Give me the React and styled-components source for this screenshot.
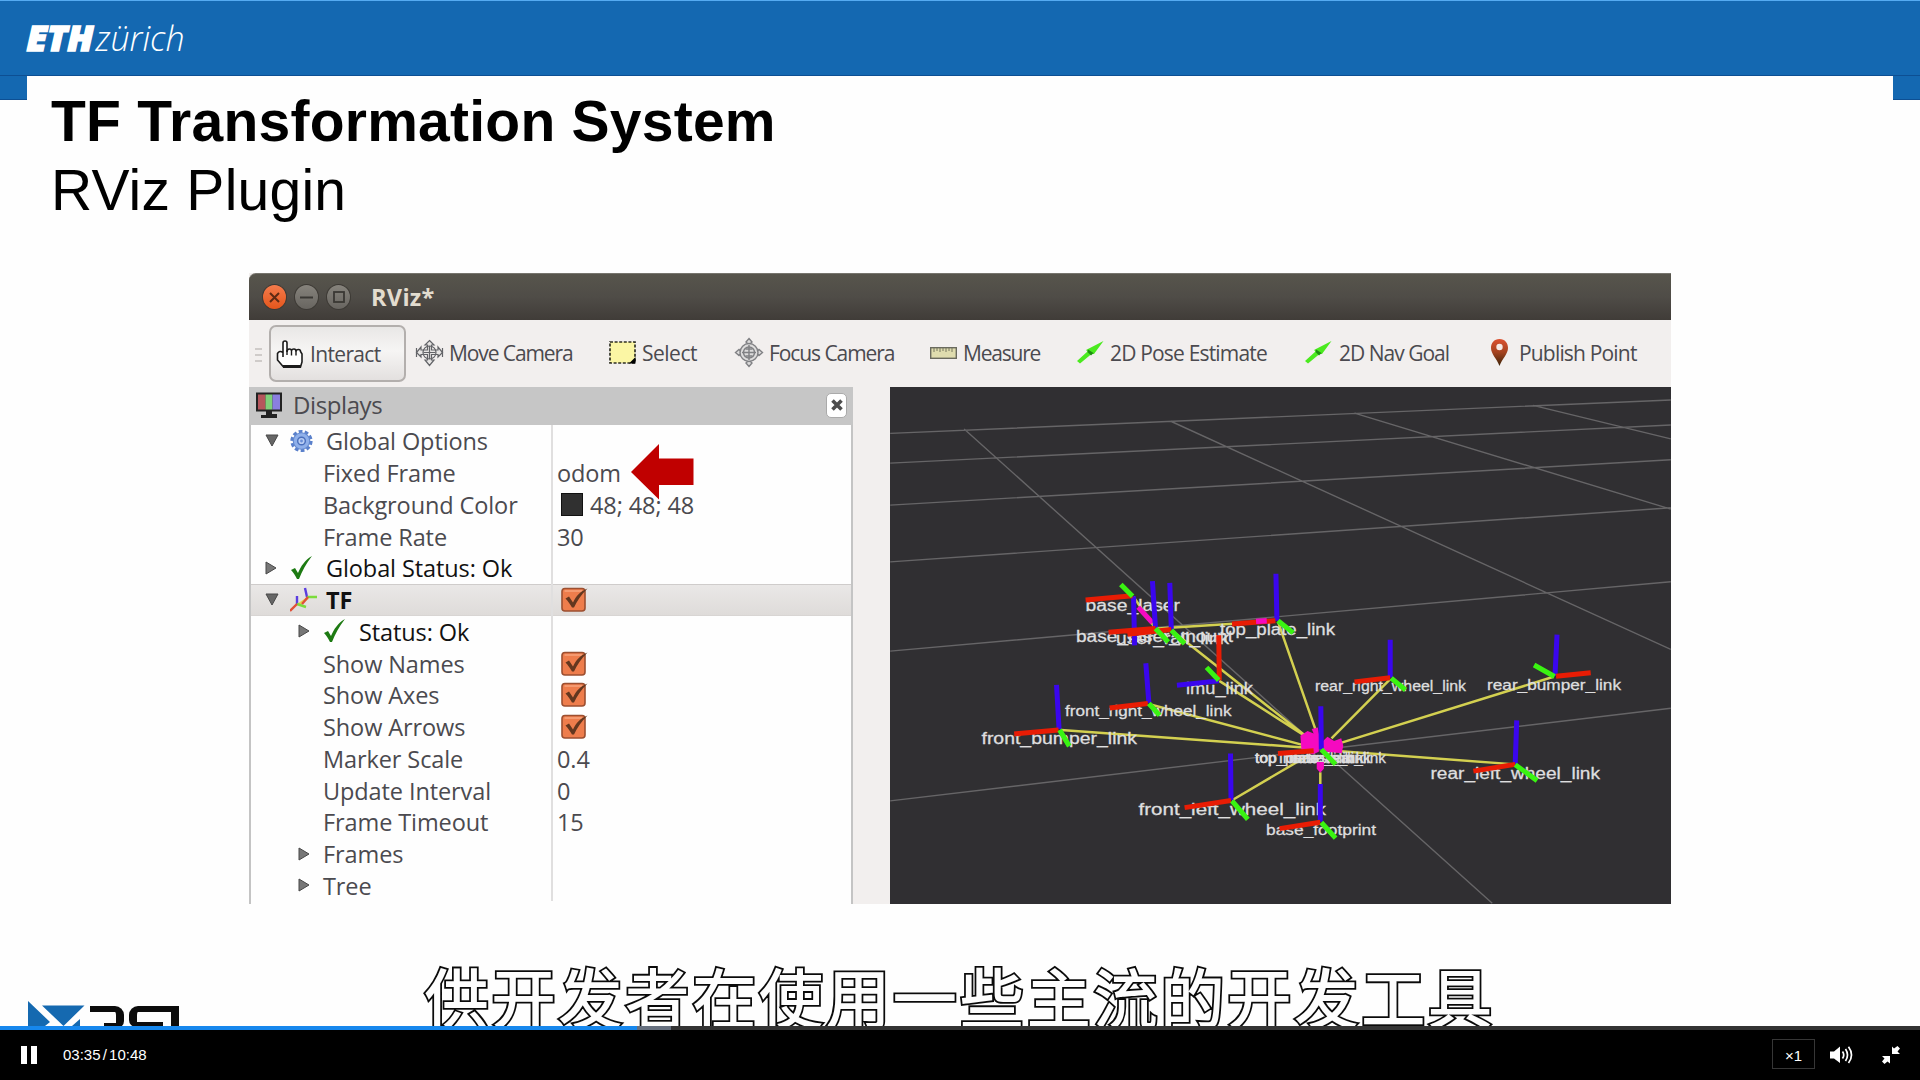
import React from "react";
import styled, { createGlobalStyle } from "styled-components";

const Global = createGlobalStyle`
  * { box-sizing: border-box; }
  html, body { margin: 0; padding: 0; background: #000; overflow: hidden; }
`;

const ui = `"Open Sans", "Noto Sans", sans-serif`;
const arial = `"Liberation Sans", Arial, sans-serif`;

const Player = styled.div`
  width: 1920px;
  height: 1080px;
  display: flex;
  flex-direction: column;
  background: #000;
  overflow: hidden;
`;
const Slide = styled.main`
  position: relative;
  height: 1026px;
  display: flex;
  flex-direction: column;
  background: #fefefe;
  overflow: hidden;
`;
const Banner = styled.header`
  flex: none;
  height: 76px;
  padding: 12px 0 0 24px;
  background: #1468b1;
  border-top: 1px solid #55abf2;
  border-bottom: 1px solid #0d4f93;
  svg { display: block; }
`;
const Heading = styled.div`
  flex: none;
  display: flex;
  height: 197px;
`;
const Notch = styled.div`
  width: ${(p) => p.$w}px;
  height: 24px;
  background: #1468b1;
  border-bottom: 1px solid #0d4f93;
`;
const Titles = styled.div`
  flex: 1;
  padding: 10px 0 0 24px;
  font-family: ${arial};
  color: #000;
`;
const Title = styled.h1`
  margin: 0;
  font-size: 57px;
  line-height: 70px;
  font-weight: 700;
  letter-spacing: 0.24px;
`;
const Subtitle = styled.h2`
  margin: 0;
  font-size: 57px;
  line-height: 69px;
  font-weight: 400;
  letter-spacing: 0.25px;
`;

const Window = styled.section`
  flex: none;
  width: 1422px;
  height: 631px;
  margin-left: 249px;
  display: flex;
  flex-direction: column;
  background: #f2efee;
  font-family: ${ui};
  color: #4b4a4f;
  overflow: hidden;
`;
const TitleBar = styled.div`
  flex: none;
  height: 47px;
  padding-left: 13px;
  display: flex;
  align-items: center;
  gap: 7px;
  background: linear-gradient(#57554c, #4f4c47 50%, #403c38);
  border-top: 1px solid #77756e;
  border-radius: 7px 0 0 0;
`;
const WinButton = styled.span`
  width: 25px;
  height: 26px;
  border-radius: 50%;
  display: grid;
  place-items: center;
  background: ${(p) => (p.$close ? "linear-gradient(#f47b4c, #e4561c)" : "linear-gradient(#86837c, #686560)")};
  border: 1px solid #3d3a35;
`;
const WinTitle = styled.span`
  margin-left: 13px;
  font-size: 23.5px;
  line-height: 30px;
  font-weight: 700;
  color: #e2dccf;
  letter-spacing: 0.3px;
`;
const Toolbar = styled.div`
  flex: none;
  height: 67px;
  display: flex;
  padding-left: 6px;
`;
const Grip = styled.div`
  width: 7px;
  height: 16px;
  margin-top: 28px;
  background: repeating-linear-gradient(#cfcbc9 0 2px, transparent 2px 6px);
`;
const Tool = styled.div`
  flex: none;
  display: flex;
  align-items: center;
  width: ${(p) => p.$w}px;
  height: 57px;
  margin: ${(p) => (p.$active ? "5px 0 0 7px" : "4px 0 0 0")};
  padding-left: ${(p) => p.$pad}px;
  ${(p) =>
    p.$active &&
    `border: 2px solid #b3afad; border-radius: 7px; background: linear-gradient(#e9e7e6, #f6f5f4 45%, #e3e0df);`}
`;
const ToolIcon = styled.span`
  flex: none;
  width: ${(p) => p.$w}px;
  display: flex;
  svg { display: block; overflow: visible; }
`;
const ToolText = styled.span`
  white-space: nowrap;
  font-size: 21px;
  line-height: 30px;
  font-weight: 500;
  letter-spacing: ${(p) => p.$ls}px;
`;
const Body = styled.div`
  flex: 1;
  display: flex;
  gap: 37px;
`;
const Panel = styled.div`
  width: 604px;
  display: flex;
  flex-direction: column;
`;
const PanelHead = styled.div`
  flex: none;
  height: 38px;
  display: flex;
  align-items: center;
  padding: 0 6px 2px 6px;
  background: #c6c6c6;
`;
const PanelName = styled.span`
  flex: 1;
  padding-left: 10px;
  font-size: 24px;
  line-height: 34px;
  font-weight: 500;
  letter-spacing: -0.4px;
`;
const CloseBox = styled.span`
  width: 21px;
  height: 25px;
  border-radius: 5px;
  background: #fff;
  border: 1px solid #aaa;
  display: grid;
  place-items: center;
`;
const Tree = styled.div`
  flex: 1;
  background: #fefefe;
  border: solid #c4c4c4;
  border-width: 0 2px;
  overflow: hidden;
  display: flex;
  flex-direction: column;
`;
const Row = styled.div`
  flex: none;
  display: flex;
  height: 31.75px;
  color: ${(p) => (p.$dark ? "#111" : "#4b4a4f")};
  background: ${(p) => (p.$sel ? "linear-gradient(#eae8e7, #dedbd9)" : "none")};
  box-shadow: ${(p) => (p.$sel ? "inset 0 1px #cfcccb, inset 0 -1px #d8d5d3" : "none")};
`;
const NameCell = styled.div`
  width: 302px;
  display: flex;
  align-items: center;
  padding-left: ${(p) => p.$indent}px;
  border-right: 2px solid #e0dfdf;
`;
const Twisty = styled.span`
  flex: none;
  display: flex;
  width: 25px;
`;
const RowIcon = styled.span`
  flex: none;
  display: flex;
  width: 36px;
`;
const Name = styled.span`
  white-space: nowrap;
  font-size: 23.5px;
  line-height: 31px;
  height: 31px;
  padding-top: 1px;
  font-weight: ${(p) => (p.$bold ? 700 : 500)};
  letter-spacing: -0.1px;
`;
const ValueCell = styled.div`
  flex: 1;
  display: flex;
  align-items: center;
  padding-left: 4px;
  position: relative;
`;
const BoxSlot = styled.span`
  display: flex;
  padding-left: 4px;
`;
const Swatch = styled.span`
  width: 22px;
  height: 23px;
  margin: 0 7px 0 4px;
  background: #303030;
  border: 1px solid #111;
`;
const Pointer = styled.svg`
  position: absolute;
  left: 78px;
  top: -13px;
  z-index: 2;
`;
const View = styled.svg`
  display: block;
  width: 781px;
  height: 517px;
  background: #302f32;
`;
const Footer = styled.div`
  position: absolute;
  left: 28px;
  top: 1000px;
  display: flex;
`;
const LogoText = styled.div`
  display: flex;
  padding: 6px 0 0 5px;
`;
const Bowl = styled.i`
  width: 34px;
  height: 22px;
  border: solid #0c0c0c;
  border-width: 6px 8px 5px 0;
  border-radius: 0 9px 7px 0;
  clip-path: polygon(0 0, 100% 0, 100% 100%, 14px 100%, 14px 8px, 0 8px);
`;
const Hook = styled.i`
  width: 42px;
  height: 21px;
  margin-left: 5px;
  border: solid #0c0c0c;
  border-width: 6px 0 5px 8px;
  border-radius: 9px 0 0 7px;
  clip-path: polygon(0 0, 100% 0, 100% 8px, 34px 8px, 34px 100%, 0 100%);
`;
const Stem = styled.i`
  width: 8px;
  height: 22px;
  background: #0c0c0c;
`;
const Caption = styled.div`
  position: absolute;
  left: 0;
  top: 945px;
  width: 1920px;
  text-align: center;
  padding-right: 1px;
  white-space: nowrap;
  font: 500 64.5px/100px "Noto Sans CJK SC", sans-serif;
  letter-spacing: 2.4px;
  color: #fdfdfd;
  -webkit-text-stroke: 3.6px #0a0a0a;
  paint-order: stroke fill;
`;
const Progress = styled.div`
  flex: none;
  height: 4px;
  display: flex;
  background: #333;
`;
const Played = styled.div`
  width: 637px;
  background: #1687ed;
`;
const Buffered = styled.div`
  width: 34px;
  background: #66707f;
`;
const Controls = styled.footer`
  flex: 1;
  display: flex;
  align-items: center;
  padding: 0 20px 0 21px;
  font-family: ${arial};
  color: #fff;
  svg { display: block; }
`;
const Pause = styled.span`
  width: 16px;
  height: 18px;
  border: solid #fff;
  border-width: 0 6px;
`;
const Time = styled.span`
  flex: 1;
  padding: 0 0 1px 26px;
  font-size: 15px;
  word-spacing: -2px;
`;
const Speed = styled.span`
  width: 43px;
  height: 30px;
  margin: -2px 15px 0 0;
  border: 1px solid #363636;
  font-size: 15px;
  line-height: 31px;
  text-align: center;
`;
const ExitSlot = styled.span`
  margin-left: 29px;
`;

const Check = () => (
  <svg width="23" height="24" viewBox="0 0 23 24">
    <path d="M1 14 L5 12 L8 17 C11 10 15 4 22 0 C16 8 12 15 9 23 L7 23 C5 19 3 16 1 14Z" fill="#1d7a12" />
  </svg>
);
const Gear = () => (
  <svg width="23" height="24" viewBox="0 0 24 24">
    <circle cx="12" cy="12" r="9.8" fill="none" stroke="#5a80cb" strokeWidth="3.6" strokeDasharray="3.8 2.35" />
    <circle cx="12" cy="12" r="8.6" fill="#8fb0ea" stroke="#6389d0" strokeWidth="1.2" />
    <circle cx="12" cy="12" r="4" fill="#b9cdf3" stroke="#4a70bd" strokeWidth="1.5" />
    <circle cx="12" cy="12" r="1.5" fill="#6a8fd8" />
  </svg>
);
const TfIcon = () => (
  <svg width="28" height="25" viewBox="0 0 28 25" fill="none" strokeWidth="2.4">
    <path d="M18 11 L9 17" stroke="#ead34a" />
    <path d="M17 10 L15 1M7 17 V9" stroke="#5a3de0" />
    <path d="M17 10 H27M7 17 L16 20" stroke="#7bdc3c" />
    <path d="M18 10 L12 17M7 17 L0 24" stroke="#e05038" />
  </svg>
);
const Box = () => (
  <svg width="27" height="25" viewBox="0 0 27 25">
    <rect x="1" y="1.5" width="23" height="22.5" rx="3" fill="#ee7d4c" stroke="#9c4f30" strokeWidth="1.6" />
    <path d="M3.5 4 H21" stroke="#f7a47c" strokeWidth="1.5" />
    <path d="M4.5 11.5 L8 9.5 L12 15.500 C15 9 19 4.500 26.500 1.5 C20 8 16 14 13 20.500 L11 20.500 C9 17 7 14 4.5 11.5Z" fill="#63371f" />
  </svg>
);
const Arrow = ({ open }) =>
  open ? (
    <svg width="14" height="13" viewBox="0 0 14 13"><path d="M1 1 H13 L7 12Z" fill="#666" stroke="#484848" /></svg>
  ) : (
    <svg width="12" height="14" viewBox="0 0 12 14"><path d="M1 1 L11 7 L1 13Z" fill="#777" stroke="#484848" /></svg>
  );

const HandIcon = () => (
  <svg width="27" height="28" viewBox="0 0 27 28">
    <path d="M7 17 V3 q0-2 2-2 q2 0 2 2 V12 q0-3 2.500-3 q2 0 2 2 q0-2 2.500-2 q2 0 2 2.500 q0-2 2.500-2 q2 0 2 2 L26 14 V22 L24.500 27 H7.500 L1.500 20 V13.500 q2-3.500 5.500-1" fill="#fff" stroke="#1c1c1c" strokeWidth="1.6" />
    <path d="M11 10 V15M15.500 11 V15.500M20 11 V15.500" stroke="#1c1c1c" strokeWidth="1.4" />
    <path d="M7 26.500 H25" stroke="#1c1c1c" strokeWidth="3" />
  </svg>
);
const MoveIcon = () => (
  <svg width="27" height="26" viewBox="0 0 27 26" fill="#e8e6e5" stroke="#636468" strokeWidth="1.2">
    <path d="M13.500 0.500 L18 5 H15.500 V10 H22 V7 L26.500 12.500 L22 17 V14.500 H15.500 V20 H18 L13.500 25.500 L9 20 H11.500 V14.500 H5 V17 L0.500 12.500 L5 7 V10 H11.500 V5 H9Z" />
    <circle cx="13.500" cy="12.500" r="6.500" fill="none" />
    <path d="M0.500 8 V17M26.500 8 V17M7.500 12.500 H19.500M13.500 6 V19" />
  </svg>
);
const SelectIcon = () => (
  <svg width="27" height="23" viewBox="0 0 27 23">
    <rect x="1" y="1" width="25" height="21" fill="#fbf6a4" stroke="#2f2f22" strokeWidth="1.7" strokeDasharray="3 1.6" />
    <path d="M26.500 16 V22.500 H20Z" fill="#000" />
  </svg>
);
const FocusIcon = () => (
  <svg width="28" height="29" viewBox="0 0 28 29" fill="#dddcdc" stroke="#808184" strokeWidth="1.4">
    <path d="M14 0.500 L17 4 L14 7 L11 4ZM14 22 L17 25 L14 28.500 L11 25ZM0.500 14.500 L4 11.500 L7 14.500 L4 17.500ZM21 14.500 L24 11.500 L27.500 14.500 L24 17.500Z" />
    <circle cx="14" cy="14.500" r="9" />
    <circle cx="14" cy="14.500" r="5.500" />
    <path d="M14 7 V22M7 14.500 H21M10.500 11 H17.500M10.500 18 H17.500" />
  </svg>
);
const RulerIcon = () => (
  <svg width="27" height="12" viewBox="0 0 27 12">
    <rect x="0.700" y="0.700" width="25.600" height="10.600" fill="#dfdcae" stroke="#6a6a5e" strokeWidth="1.4" />
    <path d="M4 1 V5M7 1 V4M10 1 V5M13 1 V4M16 1 V5M19 1 V4M22 1 V5" stroke="#77775f" />
  </svg>
);
const GreenArrow = () => (
  <svg width="27" height="23" viewBox="0 0 27 23">
    <path d="M0 20 L10.500 10.500 L9 9 L26.500 0 L17 13 L14.500 13 L3 22.500Z" fill="#4bea1f" />
    <path d="M11 8.500 L16.500 12 L14 14.500 L10.500 11Z" fill="#1d8f10" />
  </svg>
);
const PinIcon = () => (
  <svg width="17" height="27" viewBox="0 0 17 27">
    <defs>
      <linearGradient id="pin" x1="0" y1="0" x2="0" y2="1">
        <stop offset="0" stopColor="#dd5130" />
        <stop offset="0.5" stopColor="#a3421f" />
        <stop offset="1" stopColor="#3c2408" />
      </linearGradient>
    </defs>
    <path d="M8.500 0 C14 0 17 4 17 9 C17 15 11 20 8.500 27 C6 20 0 15 0 9 C0 4 3 0 8.500 0Z" fill="url(#pin)" />
    <circle cx="8.500" cy="8" r="3.200" fill="#f6eae6" />
  </svg>
);

const TOOLS = [
  { text: "Interact", w: 137, pad: 5, iw: 34, icon: <HandIcon />, active: true, ls: -0.65 },
  { text: "Move Camera", w: 193, pad: 10, iw: 33, icon: <MoveIcon />, ls: -1.1 },
  { text: "Select", w: 126, pad: 10, iw: 33, icon: <SelectIcon />, ls: -0.5 },
  { text: "Focus Camera", w: 195, pad: 10, iw: 34, icon: <FocusIcon />, ls: -1.08 },
  { text: "Measure", w: 147, pad: 10, iw: 33, icon: <RulerIcon />, ls: -1.2 },
  { text: "2D Pose Estimate", w: 228, pad: 10, iw: 33, icon: <GreenArrow />, ls: -0.82 },
  { text: "2D Nav Goal", w: 186, pad: 10, iw: 34, icon: <GreenArrow />, ls: -1 },
  { text: "Publish Point", w: 170, pad: 10, iw: 28, icon: <PinIcon />, ls: -0.82 },
];

const ROWS = [
  { name: "Global Options", arrow: "open", icon: <Gear /> },
  { name: "Fixed Frame", value: "odom", pointer: true },
  { name: "Background Color", value: "48; 48; 48", swatch: true },
  { name: "Frame Rate", value: "30" },
  { name: "Global Status: Ok", arrow: "shut", icon: <Check />, dark: true },
  { name: "TF", arrow: "open", icon: <TfIcon />, dark: true, bold: true, sel: true, box: true },
  { name: "Status: Ok", arrow: "shut", icon: <Check />, dark: true, deep: true },
  { name: "Show Names", box: true },
  { name: "Show Axes", box: true },
  { name: "Show Arrows", box: true },
  { name: "Marker Scale", value: "0.4" },
  { name: "Update Interval", value: "0" },
  { name: "Frame Timeout", value: "15" },
  { name: "Frames", arrow: "shut", deep: true },
  { name: "Tree", arrow: "shut", deep: true },
];

const TreeRow = ({ r }) => {
  const indent = r.arrow ? (r.deep ? 47 : 14) : 72;
  return (
    <Row $dark={r.dark} $sel={r.sel}>
      <NameCell $indent={indent}>
        {r.arrow && (
          <Twisty>
            <Arrow open={r.arrow === "open"} />
          </Twisty>
        )}
        {r.icon && <RowIcon>{r.icon}</RowIcon>}
        <Name $bold={r.bold}>{r.name}</Name>
      </NameCell>
      <ValueCell>
        {r.swatch && <Swatch />}
        {r.box && <BoxSlot><Box /></BoxSlot>}
        {r.value && <Name>{r.value}</Name>}
        {r.pointer && (
          <Pointer width="63" height="56" viewBox="0 0 63 56">
            <path d="M0 28 L28 0 V14.500 H62.500 V41 H28 V55.500Z" fill="#c00000" />
          </Pointer>
        )}
      </ValueCell>
    </Row>
  );
};

const GRID = "M20 158 L1550 59M20 246 L1550 133M20 370 L1550 236M20 538 L1550 378M20 802 L1550 597M20 1245 L1550 971M165 145 L1200 1548M570 122 L1550 797M930 98 L1550 382M1280 75 L1550 174";
const LINKS = "M355 1035 L830 1087M530 960 L830 1080M665 890 L830 1050M575 745 L840 1060M780 715 L855 1040M1000 885 L885 1060M1320 878 L900 1075M1245 1137 L890 1097M690 1243 L840 1110M863 1160 V1195M545 735 L700 720M497 642 L540 735";
const BLUE = "M497 640 L499 785M534 595 L540 735M568 600 L571 740M776 573 L778 712M582 903 L664 890M521 838 L527 955M346 902 L351 1033M1000 768 V880M1327 753 L1323 875M1248 1007 L1245 1137M687 1105 L688 1243M863 1195 V1307M864 965 L865 1092";
const RED = "M403 651 L495 638M448 746 L540 735M485 752 L571 738M690 722 L775 712M664 755 L665 888M450 970 L525 957M263 1047 L350 1035M930 893 L1000 881M1325 876 L1393 866M1163 1157 L1245 1137M597 1265 L688 1244M783 1327 L863 1308M780 1105 L850 1097";
const GREEN = "M472 605 L495 640M540 735 L565 775M571 740 L597 780M780 712 L810 748M640 850 L664 888M527 957 L548 992M352 1035 L371 1083M1002 882 L1030 917M1282 843 L1322 877M1245 1138 L1288 1185M690 1245 L721 1300M865 1309 L893 1355M865 1093 L893 1137";

const LABELS = [
  ["base_laser", 1085.5, 1180, 610.5, 16],
  ["base_laser_mount", 1076, 1233, 642, 16],
  ["user_rail_link", 1116, 1229, 644, 16],
  ["top_plate_link", 1220, 1335, 635, 16],
  ["imu_link", 1186, 1253, 693.5, 16],
  ["front_right_wheel_link", 1065, 1231.5, 716, 15],
  ["front_bumper_link", 981.5, 1137, 744, 16],
  ["rear_right_wheel_link", 1315, 1466, 690.5, 14],
  ["rear_bumper_link", 1487, 1621, 689.5, 15],
  ["rear_left_wheel_link", 1430.5, 1600, 778.5, 16],
  ["front_left_wheel_link", 1138.5, 1326, 815, 17],
  ["base_footprint", 1266, 1376, 835, 15],
  ["top_chassis_link", 1255, 1371, 762.5, 15],
  ["inertial_link", 1279, 1364, 762.5, 15],
  ["base_link", 1290, 1352, 762.5, 15],
  ["top_plate_rear_link", 1255, 1386, 762.5, 15],
];

const crisp = { vectorEffect: "non-scaling-stroke", fill: "none" };

const Scene = () => (
  <View viewBox="890 387 781 517">
    <g transform="translate(880 380) scale(0.5102 0.33806)">
      <path d={GRID} {...crisp} stroke="#666567" strokeWidth="1.4" />
      <path d={LINKS} {...crisp} stroke="#d3d050" strokeWidth="2.5" />
    </g>
    <g fill="#dededf" stroke="#dededf" strokeWidth="0.3" fontFamily='"Liberation Sans", Arial, sans-serif'>
      {LABELS.map(([t, a, b, y, s]) => (
        <text key={t} x={a} y={y} fontSize={s} textLength={b - a} lengthAdjust="spacingAndGlyphs">{t}</text>
      ))}
    </g>
    <g transform="translate(880 380) scale(0.5102 0.33806)">
      <path d="M824 1052 L838 1038 L850 1046 L846 1032 L858 1028 L862 1060 L860 1100 L848 1108 L826 1094ZM867 1070 L877 1055 L890 1068 L904 1060 L908 1082 L905 1104 L868 1098ZM856 1130 H870 V1150 L863 1162 L856 1150Z" fill="#f50ac0" />
      <path d="M506 672 L534 718" {...crisp} stroke="#f50ac0" strokeWidth="5" />
      <path d={BLUE} {...crisp} stroke="#3a06ee" strokeWidth="5" />
      <path d={RED} {...crisp} stroke="#e81c04" strokeWidth="5" />
      <path d={GREEN} {...crisp} stroke="#3af312" strokeWidth="5" />
      <path d="M737 714 L758 712" {...crisp} stroke="#f50ac0" strokeWidth="5.5" />
    </g>
  </View>
);

const Brand = () => (
  <svg width="176" height="52" viewBox="24 13 176 52" fill="#fff">
    <text x="26.500" y="50.500" fontFamily='"Open Sans", sans-serif' fontWeight="800" fontStyle="italic" fontSize="36" textLength="67" lengthAdjust="spacingAndGlyphs" stroke="#fff" strokeWidth="1.6">ETH</text>
    <text x="95.500" y="50.500" fontFamily='"Open Sans", sans-serif' fontWeight="300" fontStyle="italic" fontSize="34" textLength="89" lengthAdjust="spacingAndGlyphs">zürich</text>
  </svg>
);

export default function App() {
  return (
    <Player>
      <Global />
      <Slide>
        <Banner><Brand /></Banner>
        <Heading>
          <Notch $w={27} />
          <Titles>
            <Title>TF Transformation System</Title>
            <Subtitle>RViz Plugin</Subtitle>
          </Titles>
          <Notch $w={27} />
        </Heading>
        <Window>
          <TitleBar>
            <WinButton $close>
              <svg width="11" height="11" viewBox="0 0 11 11"><path d="M1 1 L10 10M10 1 L1 10" stroke="#5e2a14" strokeWidth="2" /></svg>
            </WinButton>
            <WinButton>
              <svg width="13" height="11" viewBox="0 0 13 11"><path d="M0 5.500 H13" stroke="#3a3834" strokeWidth="2" /></svg>
            </WinButton>
            <WinButton>
              <svg width="12" height="12" viewBox="0 0 12 12"><rect x="1" y="1" width="10" height="10" fill="none" stroke="#3a3834" strokeWidth="1.8" /></svg>
            </WinButton>
            <WinTitle>RViz*</WinTitle>
          </TitleBar>
          <Toolbar>
            <Grip />
            {TOOLS.map((t) => (
              <Tool key={t.text} $w={t.w} $pad={t.pad} $active={t.active}>
                <ToolIcon $w={t.iw}>{t.icon}</ToolIcon>
                <ToolText $ls={t.ls}>{t.text}</ToolText>
              </Tool>
            ))}
          </Toolbar>
          <Body>
            <Panel>
              <PanelHead>
                <svg width="28" height="28" viewBox="0 0 28 28">
                  <rect x="1" y="1.500" width="26" height="19" fill="#222" />
                  <rect x="3" y="3.500" width="7.500" height="15" fill="#b5565c" />
                  <rect x="10.500" y="3.500" width="7" height="15" fill="#7fd07a" />
                  <rect x="17.500" y="3.500" width="7.500" height="15" fill="#8a7fe0" />
                  <path d="M11 20 H17 V23 H22 V27 H6 V24 H11Z" fill="#222" />
                </svg>
                <PanelName>Displays</PanelName>
                <CloseBox>
                  <svg width="12" height="12" viewBox="0 0 12 12"><path d="M1.500 1.500 L10.500 10.500M10.500 1.500 L1.500 10.500" stroke="#4c4c4c" strokeWidth="3.600" /></svg>
                </CloseBox>
              </PanelHead>
              <Tree>
                {ROWS.map((r) => <TreeRow key={r.name} r={r} />)}
              </Tree>
            </Panel>
            <Scene />
          </Body>
        </Window>
        <Footer>
          <svg width="57" height="26" viewBox="28 1000 57 26" fill="#1569b0">
            <path d="M28 1001 L50 1022 L45 1026 H28ZM42 1005.500 H84.500 L63.500 1026ZM80 1019 V1026 H72Z" />
          </svg>
          <LogoText><Bowl /><Hook /><Stem /></LogoText>
        </Footer>
        <Caption>供开发者在使用一些主流的开发工具</Caption>
      </Slide>
      <Progress><Played /><Buffered /></Progress>
      <Controls>
        <Pause />
        <Time>03:35 / 10:48</Time>
        <Speed>×1</Speed>
        <svg width="23" height="18" viewBox="0 0 23 18">
          <path d="M0 5.500 H4 L10 0.500 V17 L4 12.500 H0Z" fill="#fff" />
          <path d="M12.500 5.500 Q15 9 12.500 12.500M15.500 3 Q19.500 9 15.500 15M18.500 0.800 Q24.500 9 18.500 17" fill="none" stroke="#fff" strokeWidth="1.700" />
        </svg>
        <ExitSlot>
          <svg width="18" height="18" viewBox="0 0 18 18" fill="#fff">
            <path d="M10 0.500 L12 2.500 L15.500 0 L18 2.500 L15.500 5.500 L18 8 H10ZM0 10 H8 V17.500 L5.500 15.500 L2.500 18 L0 15.500 L2.500 12.500Z" />
          </svg>
        </ExitSlot>
      </Controls>
    </Player>
  );
}
